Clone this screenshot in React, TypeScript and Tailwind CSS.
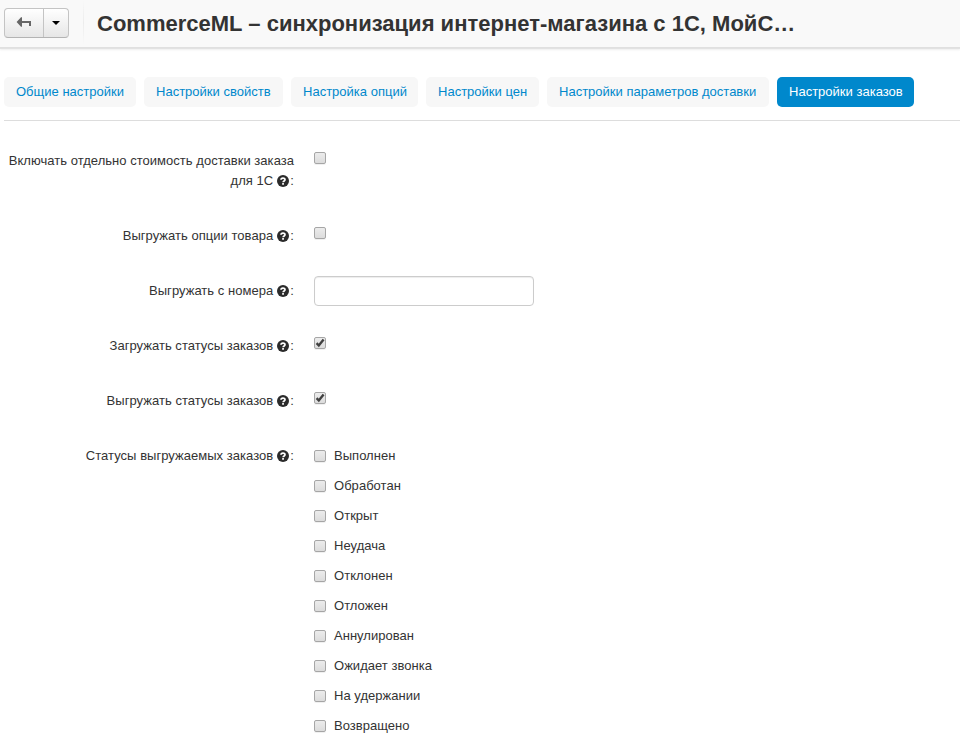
import React from "react";

const tabs = [
  { label: "Общие настройки", width: "w-[132px]" },
  { label: "Настройки свойств", width: "w-[139px]" },
  { label: "Настройка опций", width: "w-[127px]" },
  { label: "Настройки цен", width: "w-[113px]" },
  { label: "Настройки параметров доставки", width: "w-[222px]" },
  { label: "Настройки заказов", width: "w-[137px]", active: true },
];

const statuses = ["Выполнен", "Обработан", "Открыт", "Неудача", "Отклонен", "Отложен", "Аннулирован", "Ожидает звонка", "На удержании", "Возвращено"];

function Check({ checked = false }: { checked?: boolean }) {
  return (
    <span className="block size-3 shrink-0 rounded-[2px] border border-[#a6a6a6] bg-linear-to-b from-[#ececec] to-[#dcdcdc] shadow-[0_1px_0_rgba(0,0,0,0.06)]">
      {checked && (
        <svg viewBox="0 0 12 12" className="-mt-px -ml-px size-3">
          <path d="M2.6 6.2 4.8 8.5 9.6 2.6" fill="none" stroke="#404040" strokeWidth="2.4" />
        </svg>
      )}
    </span>
  );
}

function Help() {
  return (
    <svg viewBox="0 0 12 12" className="mr-px ml-[0.5px] inline-block size-3 align-[-2px]">
      <circle cx="6" cy="6" r="6" fill="#2b2b2b" />
      <path d="M4 4.8C4 2.6 8 2.6 8 4.7 8 5.9 6.1 6 6.1 7.3" fill="none" stroke="#fff" strokeWidth="1.7" />
      <rect x="5.1" y="8.1" width="1.9" height="1.6" fill="#fff" />
    </svg>
  );
}

function Row({ label, children, height = "h-[55px]" }: { label: string; children: React.ReactNode; height?: string }) {
  return (
    <div className={`flex ${height}`}>
      <div className="w-[294px] shrink-0 pt-[5px] text-right tracking-[0.03px]">
        {label} <Help />:
      </div>
      <div className="ml-5">{children}</div>
    </div>
  );
}

export default function App() {
  return (
    <div className="h-[741px] w-[960px] overflow-hidden bg-white font-['Liberation_Sans',Arial,sans-serif] text-[13px] leading-5 text-[#333]">
      <header className="flex h-12 items-start bg-[#f9f9f9] pl-1 shadow-[inset_0_-1px_0_#e0e0e0,0_1px_0_#e2e2e2,0_2px_2px_rgba(0,0,0,0.07)]">
        <div className="mt-2 flex h-[30px] w-[65px] rounded border border-[#c4c4c4] border-b-[#b3b3b3] bg-linear-to-b from-white to-[#e6e6e6]">
          <div className="flex w-[39px] justify-center border-r border-[#c4c4c4] pt-[8px]">
            <svg viewBox="0 0 16 10" className="h-[10px] w-4">
              <path d="M0.6 5 5 0.2H6V4H15V9H13V6H6V9.8H5Z" fill="#666" />
            </svg>
          </div>
          <div className="flex flex-1 items-center justify-center">
            <svg viewBox="0 0 8 4" className="h-1 w-2"><path d="M0 0H8L4 4Z" fill="#000" /></svg>
          </div>
        </div>
        <div className="ml-[14px] h-[45px] w-px bg-linear-to-b from-[#f9f9f9] via-[#ececec] to-[#f9f9f9]" />
        <h1 className="ml-[13px] pt-1 text-[22px] leading-10 font-bold tracking-[0.008px] whitespace-nowrap">CommerceML – синхронизация интернет-магазина с 1С, МойС…</h1>
      </header>
      <nav className="ml-1 flex h-[73px] gap-2 border-b border-[#ddd] pt-[29px]">
        {tabs.map((t) => (
          <div key={t.label} className={`flex h-[30px] ${t.width} items-center rounded-[5px] pl-3 tracking-[0.01px] whitespace-nowrap ${t.active ? "bg-[#0088cc] text-white" : "bg-[#f7f7f7] text-[#0088cc]"}`}>{t.label}</div>
        ))}
      </nav>
      <main className="pt-[25px]">
        <Row label="Включать отдельно стоимость доставки заказа для 1С" height="h-[75px]"><div className="pt-[6px]"><Check /></div></Row>
        <Row label="Выгружать опции товара"><div className="pt-[6px]"><Check /></div></Row>
        <Row label="Выгружать с номера"><div className="h-[30px] w-[220px] rounded border border-[#ccc] shadow-[inset_0_1px_1px_rgba(0,0,0,0.075)]" /></Row>
        <Row label="Загружать статусы заказов"><div className="pt-[6px]"><Check checked /></div></Row>
        <Row label="Выгружать статусы заказов"><div className="pt-[6px]"><Check checked /></div></Row>
        <Row label="Статусы выгружаемых заказов" height="h-[310px]">
          <div className="pt-[5px]">
            {statuses.map((s) => (
              <div key={s} className="mb-[10px] flex h-5 items-center gap-2 tracking-[0.03px]"><Check />{s}</div>
            ))}
          </div>
        </Row>
      </main>
    </div>
  );
}
